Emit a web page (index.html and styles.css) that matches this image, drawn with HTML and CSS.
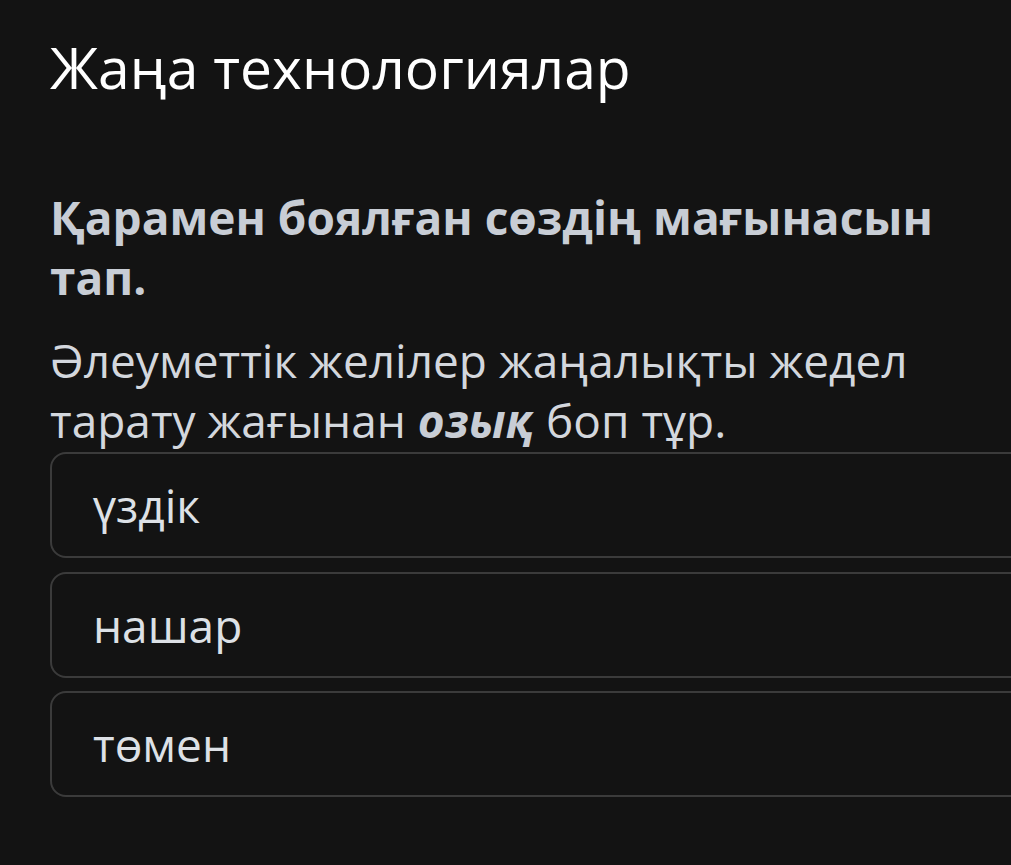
FILE: index.html
```html
<!DOCTYPE html>
<html lang="kk">
<head>
<meta charset="utf-8">
<link rel="stylesheet" href="styles.css">
</head>
<body>
<main class="page">
  <h1 class="title">Жаңа технологиялар</h1>
  <h2 class="question">Қарамен боялған сөздің мағынасын тап.</h2>
  <p class="sentence">Әлеуметтік желілер жаңалықты жедел тарату жағынан <b><i>озық</i></b> боп тұр.</p>
  <ul class="options">
    <li class="option">үздік</li>
    <li class="option">нашар</li>
    <li class="option">төмен</li>
  </ul>
</main>
</body>
</html>
```

FILE: styles.css
```css
html, body {
  margin: 0;
  padding: 0;
  background: #131313;
}
body {
  font-family: "Open Sans", "Noto Sans", sans-serif;
  overflow: hidden;
}
.page {
  padding: 29px 0 0 50px;
  width: 1100px;
}
.title {
  margin: 0;
  font-size: 57px;
  font-weight: 400;
  line-height: 76px;
  color: #ffffff;
}
.question {
  margin: 82px 0 0 0;
  width: 900px;
  font-size: 46px;
  font-weight: 700;
  line-height: 60px;
  color: #c8cdd5;
}
.sentence {
  margin: 23px 0 0 0;
  width: 900px;
  font-size: 46px;
  font-weight: 400;
  line-height: 60px;
  color: #d3d7dd;
}
.sentence b {
  color: #c8cdd5;
}
.options {
  list-style: none;
  margin: 2px 0 0 0;
  padding: 0;
  display: flex;
  flex-direction: column;
  gap: 13.5px;
}
.option {
  box-sizing: border-box;
  height: 106px;
  display: flex;
  align-items: center;
  padding-left: 41px;
  border: 2px solid #3b3b3b;
  border-radius: 16px;
  font-size: 46px;
  color: #dde1e6;
}
```
